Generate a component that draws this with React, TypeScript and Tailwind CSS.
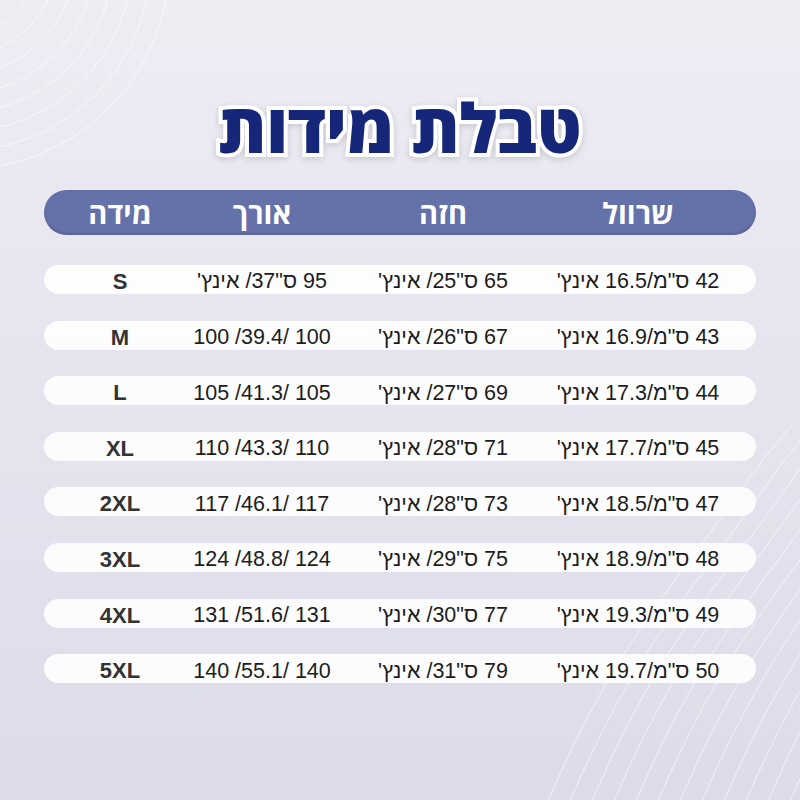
import React from "react";

const rows = [
  { size: "S", length: "95 ס\"37/ אינץ'", chest: "65 ס\"25/ אינץ'", sleeve: "42 ס\"מ/16.5 אינץ'" },
  { size: "M", length: "100 /39.4/ 100", chest: "67 ס\"26/ אינץ'", sleeve: "43 ס\"מ/16.9 אינץ'" },
  { size: "L", length: "105 /41.3/ 105", chest: "69 ס\"27/ אינץ'", sleeve: "44 ס\"מ/17.3 אינץ'" },
  { size: "XL", length: "110 /43.3/ 110", chest: "71 ס\"28/ אינץ'", sleeve: "45 ס\"מ/17.7 אינץ'" },
  { size: "2XL", length: "117 /46.1/ 117", chest: "73 ס\"28/ אינץ'", sleeve: "47 ס\"מ/18.5 אינץ'" },
  { size: "3XL", length: "124 /48.8/ 124", chest: "75 ס\"29/ אינץ'", sleeve: "48 ס\"מ/18.9 אינץ'" },
  { size: "4XL", length: "131 /51.6/ 131", chest: "77 ס\"30/ אינץ'", sleeve: "49 ס\"מ/19.3 אינץ'" },
  { size: "5XL", length: "140 /55.1/ 140", chest: "79 ס\"31/ אינץ'", sleeve: "50 ס\"מ/19.7 אינץ'" },
];

const cols = "grid grid-cols-[236px_154px_208px_76px] items-center";

// decorative background lines
const Lines = () => (
  <svg className="absolute inset-0 pointer-events-none" width="800" height="800" viewBox="0 0 800 800">
    <g fill="none" stroke="white" strokeOpacity="0.6" strokeWidth="1">
      {[0, 1, 2, 3, 4, 5, 6, 7, 8].map((i) => (
        <circle key={i} cx={-40} cy={-40} r={58 + i * 19} />
      ))}
      {[0, 1, 2, 3, 4, 5, 6, 7, 8, 9, 10, 11, 12].map((i) => (
        <path
          key={i}
          d={`M ${540 + i * 22} 820 C ${590 + i * 22} 700, ${630 + i * 22} 640, ${690 + i * 22} 560 S ${770 + i * 22} 440, ${830 + i * 22} 390`}
        />
      ))}
    </g>
  </svg>
);

export default function App() {
  return (
    <div className="relative w-[800px] h-[800px] overflow-hidden bg-gradient-to-b from-[#eeedf4] to-[#dcdbe9] font-['Liberation_Sans',sans-serif]">
      <Lines />
      <div dir="rtl" className="relative flex flex-col items-center pt-[86px]">
        <h1 className="text-[68px] leading-[82px] font-extrabold text-[#16277a] font-['Open_Sans','DejaVu_Sans',sans-serif] [-webkit-text-stroke:8px_white] [paint-order:stroke_fill] drop-shadow-[0_2px_3px_rgba(0,0,0,0.15)]">
          טבלת מידות
        </h1>

        <div className={`${cols} mt-[22px] w-[712px] h-[45px] rounded-full bg-[#6571a9] shadow-[inset_0_-2px_3px_rgba(0,0,0,0.12)] text-white text-[29px] font-bold font-['Open_Sans','DejaVu_Sans',sans-serif]`}>
          <div className="text-center">שרוול</div>
          <div className="text-center">חזה</div>
          <div className="text-center">אורך</div>
          <div className="text-center">מידה</div>
        </div>

        <div className="mt-[30px] flex flex-col gap-[26.6px]">
          {rows.map((r) => (
            <div key={r.size} className={`${cols} w-[712px] h-[29px] rounded-full bg-white/90 text-[21.5px] text-[#1c1c1c]`}>
              <div className="text-center">{r.sleeve}</div>
              <div className="text-center">{r.chest}</div>
              <div className="text-center">{r.length}</div>
              <div dir="ltr" className="text-center font-bold text-[22px] text-[#333]">{r.size}</div>
            </div>
          ))}
        </div>
      </div>
    </div>
  );
}
